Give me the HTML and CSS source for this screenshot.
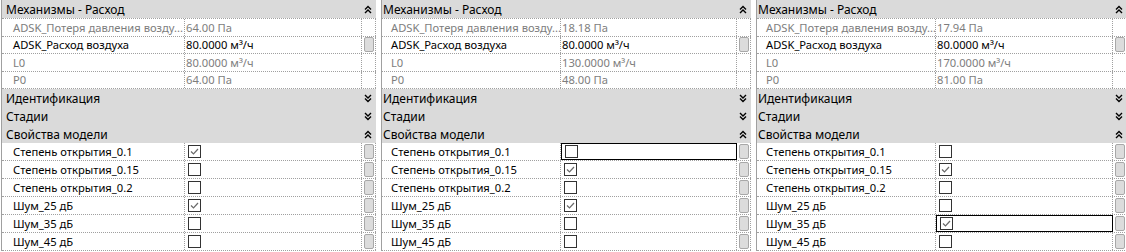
FILE: index.html
```html
<!DOCTYPE html>
<html lang="ru">
<head>
  <meta charset="UTF-8">
  <title>Свойства</title>
  <link rel="stylesheet" href="styles.css">
</head>
<body>
<div class="panels">

  <!-- panel 1 -->
  <div class="panel panel-a">
    <div class="group"><span class="group-title">Механизмы - Расход</span><span class="chev"><svg width="8" height="9" viewBox="0 0 8 9"><path d="M1 4.5 L4 1.5 L7 4.5 M1 8 L4 5 L7 8" /></svg></span></div>
    <div class="rows-mech">
      <div class="row mech ro"><div class="name">ADSK_Потеря давления возду...</div><div class="value">64.00 Па</div><div class="scroll"></div></div>
      <div class="row mech"><div class="name">ADSK_Расход воздуха</div><div class="value">80.0000 м³/ч</div><div class="scroll"><div class="thumb"></div></div></div>
      <div class="row mech ro"><div class="name">L0</div><div class="value">80.0000 м³/ч</div><div class="scroll"></div></div>
      <div class="row mech ro"><div class="name">P0</div><div class="value">64.00 Па</div><div class="scroll"></div></div>
    </div>
    <div class="group"><span class="group-title">Идентификация</span><span class="chev"><svg width="8" height="9" viewBox="0 0 8 9"><path d="M1 1 L4 4 L7 1 M1 4.5 L4 7.5 L7 4.5" /></svg></span></div>
    <div class="group"><span class="group-title">Стадии</span><span class="chev"><svg width="8" height="9" viewBox="0 0 8 9"><path d="M1 1 L4 4 L7 1 M1 4.5 L4 7.5 L7 4.5" /></svg></span></div>
    <div class="group"><span class="group-title">Свойства модели</span><span class="chev"><svg width="8" height="9" viewBox="0 0 8 9"><path d="M1 4.5 L4 1.5 L7 4.5 M1 8 L4 5 L7 8" /></svg></span></div>
    <div class="row prop"><div class="name">Степень открытия_0.1</div><div class="value"><span class="check checked"><svg width="11" height="11" viewBox="0 0 11 11"><path d="M2 5.5 L4.5 8 L9 3" /></svg></span></div><div class="scroll"><div class="thumb"></div></div></div>
    <div class="row prop"><div class="name">Степень открытия_0.15</div><div class="value"><span class="check"></span></div><div class="scroll"><div class="thumb"></div></div></div>
    <div class="row prop"><div class="name">Степень открытия_0.2</div><div class="value"><span class="check"></span></div><div class="scroll"><div class="thumb"></div></div></div>
    <div class="row prop"><div class="name">Шум_25 дБ</div><div class="value"><span class="check checked"><svg width="11" height="11" viewBox="0 0 11 11"><path d="M2 5.5 L4.5 8 L9 3" /></svg></span></div><div class="scroll"><div class="thumb"></div></div></div>
    <div class="row prop"><div class="name">Шум_35 дБ</div><div class="value"><span class="check"></span></div><div class="scroll"><div class="thumb"></div></div></div>
    <div class="row prop"><div class="name">Шум_45 дБ</div><div class="value"><span class="check"></span></div><div class="scroll"><div class="thumb"></div></div></div>
  </div>

  <!-- panel 2 -->
  <div class="panel panel-b">
    <div class="group"><span class="group-title">Механизмы - Расход</span><span class="chev"><svg width="8" height="9" viewBox="0 0 8 9"><path d="M1 4.5 L4 1.5 L7 4.5 M1 8 L4 5 L7 8" /></svg></span></div>
    <div class="rows-mech">
      <div class="row mech ro"><div class="name">ADSK_Потеря давления возду...</div><div class="value">18.18 Па</div><div class="scroll"></div></div>
      <div class="row mech"><div class="name">ADSK_Расход воздуха</div><div class="value">80.0000 м³/ч</div><div class="scroll"><div class="thumb"></div></div></div>
      <div class="row mech ro"><div class="name">L0</div><div class="value">130.0000 м³/ч</div><div class="scroll"></div></div>
      <div class="row mech ro"><div class="name">P0</div><div class="value">48.00 Па</div><div class="scroll"></div></div>
    </div>
    <div class="group"><span class="group-title">Идентификация</span><span class="chev"><svg width="8" height="9" viewBox="0 0 8 9"><path d="M1 1 L4 4 L7 1 M1 4.5 L4 7.5 L7 4.5" /></svg></span></div>
    <div class="group"><span class="group-title">Стадии</span><span class="chev"><svg width="8" height="9" viewBox="0 0 8 9"><path d="M1 1 L4 4 L7 1 M1 4.5 L4 7.5 L7 4.5" /></svg></span></div>
    <div class="group"><span class="group-title">Свойства модели</span><span class="chev"><svg width="8" height="9" viewBox="0 0 8 9"><path d="M1 4.5 L4 1.5 L7 4.5 M1 8 L4 5 L7 8" /></svg></span></div>
    <div class="row prop"><div class="name">Степень открытия_0.1</div><div class="value focus"><span class="check"></span></div><div class="scroll"><div class="thumb"></div></div></div>
    <div class="row prop"><div class="name">Степень открытия_0.15</div><div class="value"><span class="check checked"><svg width="11" height="11" viewBox="0 0 11 11"><path d="M2 5.5 L4.5 8 L9 3" /></svg></span></div><div class="scroll"><div class="thumb"></div></div></div>
    <div class="row prop"><div class="name">Степень открытия_0.2</div><div class="value"><span class="check"></span></div><div class="scroll"><div class="thumb"></div></div></div>
    <div class="row prop"><div class="name">Шум_25 дБ</div><div class="value"><span class="check checked"><svg width="11" height="11" viewBox="0 0 11 11"><path d="M2 5.5 L4.5 8 L9 3" /></svg></span></div><div class="scroll"><div class="thumb"></div></div></div>
    <div class="row prop"><div class="name">Шум_35 дБ</div><div class="value"><span class="check"></span></div><div class="scroll"><div class="thumb"></div></div></div>
    <div class="row prop"><div class="name">Шум_45 дБ</div><div class="value"><span class="check"></span></div><div class="scroll"><div class="thumb"></div></div></div>
  </div>

  <!-- panel 3 -->
  <div class="panel panel-c">
    <div class="group"><span class="group-title">Механизмы - Расход</span><span class="chev"><svg width="8" height="9" viewBox="0 0 8 9"><path d="M1 4.5 L4 1.5 L7 4.5 M1 8 L4 5 L7 8" /></svg></span></div>
    <div class="rows-mech">
      <div class="row mech ro"><div class="name">ADSK_Потеря давления возду...</div><div class="value">17.94 Па</div><div class="scroll"></div></div>
      <div class="row mech"><div class="name">ADSK_Расход воздуха</div><div class="value">80.0000 м³/ч</div><div class="scroll"><div class="thumb"></div></div></div>
      <div class="row mech ro"><div class="name">L0</div><div class="value">170.0000 м³/ч</div><div class="scroll"></div></div>
      <div class="row mech ro"><div class="name">P0</div><div class="value">81.00 Па</div><div class="scroll"></div></div>
    </div>
    <div class="group"><span class="group-title">Идентификация</span><span class="chev"><svg width="8" height="9" viewBox="0 0 8 9"><path d="M1 1 L4 4 L7 1 M1 4.5 L4 7.5 L7 4.5" /></svg></span></div>
    <div class="group"><span class="group-title">Стадии</span><span class="chev"><svg width="8" height="9" viewBox="0 0 8 9"><path d="M1 1 L4 4 L7 1 M1 4.5 L4 7.5 L7 4.5" /></svg></span></div>
    <div class="group"><span class="group-title">Свойства модели</span><span class="chev"><svg width="8" height="9" viewBox="0 0 8 9"><path d="M1 4.5 L4 1.5 L7 4.5 M1 8 L4 5 L7 8" /></svg></span></div>
    <div class="row prop"><div class="name">Степень открытия_0.1</div><div class="value"><span class="check"></span></div><div class="scroll"><div class="thumb"></div></div></div>
    <div class="row prop"><div class="name">Степень открытия_0.15</div><div class="value"><span class="check checked"><svg width="11" height="11" viewBox="0 0 11 11"><path d="M2 5.5 L4.5 8 L9 3" /></svg></span></div><div class="scroll"><div class="thumb"></div></div></div>
    <div class="row prop"><div class="name">Степень открытия_0.2</div><div class="value"><span class="check"></span></div><div class="scroll"><div class="thumb"></div></div></div>
    <div class="row prop"><div class="name">Шум_25 дБ</div><div class="value"><span class="check"></span></div><div class="scroll"><div class="thumb"></div></div></div>
    <div class="row prop"><div class="name">Шум_35 дБ</div><div class="value focus"><span class="check checked"><svg width="11" height="11" viewBox="0 0 11 11"><path d="M2 5.5 L4.5 8 L9 3" /></svg></span></div><div class="scroll"><div class="thumb"></div></div></div>
    <div class="row prop"><div class="name">Шум_45 дБ</div><div class="value"><span class="check"></span></div><div class="scroll"><div class="thumb"></div></div></div>
  </div>

</div>
</body>
</html>
```

FILE: styles.css
```css
* {
  margin: 0;
  box-sizing: border-box;
}

body {
  font-family: 'Noto Sans', 'Open Sans', sans-serif;
  font-size: 11.2px;
  color: #000;
  background-color: #fff;
  width: 1126px;
  height: 252px;
  overflow: hidden;
}

.panels {
  display: flex;
  gap: 5px;
  padding-left: 1px;
}

.panel {
  border-left: 1px solid #a0a0a0;
  display: flex;
  flex-direction: column;
  flex: none;
}

.panel-a {
  --cols: 183px 177px 14px;
  --pad: 11px;
  --gpad: 4px;
}

.panel-b {
  --cols: 179px 176px 14px;
  --pad: 9px;
  --gpad: 1px;
}

.panel-c {
  --cols: 179px 177px 14px;
  --pad: 9px;
  --gpad: 1px;
}

/* section headers */
.group {
  height: 18px;
  background-color: #dadada;
  display: flex;
  align-items: center;
  justify-content: space-between;
  padding-left: var(--gpad);
  white-space: nowrap;
}

.group-title {
  font-size: 12px;
}

.chev {
  width: 14px;
  display: flex;
  padding-left: 2px;
}

.chev svg path {
  fill: none;
  stroke: #000;
  stroke-width: 1.4;
}

.rows-mech {
  border-top: 1px dotted #a0a0a0;
}

.row {
  display: grid;
  grid-template-columns: var(--cols);
  border-bottom: 1px dotted #a0a0a0;
  white-space: nowrap;
}

.row.mech {
  height: 17.5px;
}

.row.prop {
  height: 18px;
}

.row > div {
  border-right: 1px dotted #a0a0a0;
  display: flex;
  align-items: center;
  overflow: hidden;
}

.name {
  padding-left: var(--pad);
}

.value {
  padding-left: 1px;
}

.ro .name, .ro .value {
  color: #7d7d7d;
}

.value.focus {
  border: 1px solid #000 !important;
  padding-left: 3px;
}

.prop .value {
  padding-left: 3px;
}

.check {
  width: 13px;
  height: 13px;
  border: 1px solid #333;
  background-color: #fff;
  display: flex;
  align-items: center;
  justify-content: center;
}

.check svg path {
  fill: none;
  stroke: #6a6a6a;
  stroke-width: 1.2;
}

.scroll {
  justify-content: center;
}

.thumb {
  width: 10px;
  height: 15px;
  background-color: #dcdcdc;
  border: 1px solid #a8a8a8;
  border-radius: 2px;
}
```
